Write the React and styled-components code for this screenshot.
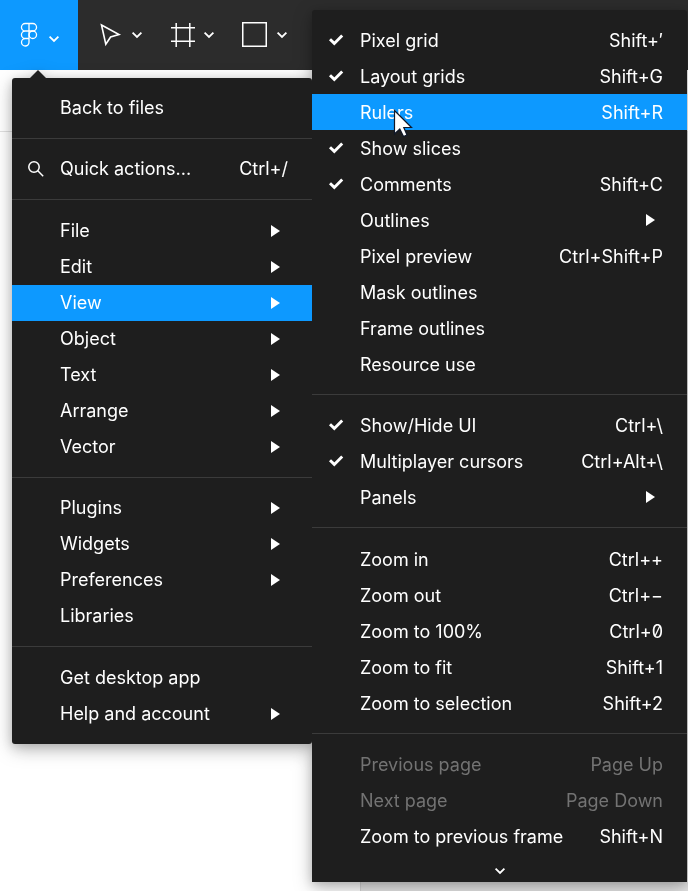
import React from "react";
import styled, { createGlobalStyle, css } from "styled-components";

const Global = createGlobalStyle`
  * { box-sizing: border-box; }
  html, body { margin: 0; background: #ffffff; }
  body {
    font-family: Inter, "Open Sans", sans-serif;
    font-size: 18px;
    line-height: 24px;
    color: #ffffff;
  }
  button {
    font: inherit;
    color: inherit;
    border: 0;
    margin: 0;
    padding: 0;
    background: none;
    text-align: left;
    cursor: default;
  }
`;

const Page = styled.div`
  position: relative;
  min-height: 100vh;
  display: flex;
  flex-direction: column;
  overflow: hidden;
`;

const Toolbar = styled.header`
  display: flex;
  height: 70px;
  background: #2c2c2c;
`;

const ToolButton = styled.button`
  display: flex;
  align-items: center;
  justify-content: center;
  gap: 8px;
  width: 72px;
  height: 70px;
`;

const MainMenuButton = styled(ToolButton)`
  width: 78px;
  gap: 10px;
  padding-left: 2px;
  background: #0d99ff;
`;

const LowChevron = styled.span`
  display: flex;
  padding-top: 8px;
`;

const Tools = styled.div`
  display: flex;
  padding-left: 7px;
`;

const Workspace = styled.main`
  flex: 1;
  display: flex;
  flex-direction: column;
`;

const TabStrip = styled.div`
  height: 62px;
  border-bottom: 1px solid #e0e0e0;
`;

const Panels = styled.div`
  flex: 1;
  display: flex;
`;

const LayersPanel = styled.aside`
  width: 361px;
  border-right: 1px solid #d4d4d4;
`;

const Canvas = styled.section`
  flex: 1;
  background: #e5e5e5;
`;

const MenuLayer = styled.div`
  position: absolute;
  top: 10px;
  left: 12px;
  display: flex;
  align-items: flex-start;
  filter: drop-shadow(0 5px 9px rgba(0, 0, 0, 0.26)) drop-shadow(0 2px 4px rgba(0, 0, 0, 0.14));
`;

const MenuPanel = styled.nav`
  position: relative;
  background: #1e1e1e;
`;

const MainMenu = styled(MenuPanel)`
  margin-top: 68px;
  width: 300px;
  border-radius: 3px;
`;

const SubMenu = styled(MenuPanel)`
  width: 375px;
  border-radius: 3px 3px 0 0;
`;

const Pointer = styled.svg`
  position: absolute;
  top: -8px;
  left: 18px;
`;

const Group = styled.div`
  padding: 12px 0;

  & + & {
    border-top: 1px solid #3b3b3b;
  }

  & + &:nth-of-type(odd) {
    padding-top: 13px;
  }

  &:last-of-type {
    padding-bottom: ${(p) => (p.$flush ? "0" : "12px")};
  }
`;

const Item = styled.button`
  display: flex;
  align-items: center;
  width: 100%;
  height: 36px;
  padding-right: ${(p) => (p.$arrow ? "32px" : "24px")};
  white-space: nowrap;
  ${(p) => p.$active && css`background: #0d99ff;`}

  &:disabled {
    color: #737373;
  }
`;

const Gutter = styled.span`
  display: flex;
  align-items: center;
  justify-content: center;
  width: 48px;
  height: 36px;
`;

const Label = styled.span`
  flex: 1;

  ${SubMenu} & {
    padding-top: 1px;
  }
`;

const Shortcut = styled.span`
  font-feature-settings: "zero" 1;

  ${SubMenu} & {
    padding-top: 1px;
  }
`;

const MoreButton = styled.button`
  display: flex;
  align-items: center;
  justify-content: center;
  width: 100%;
  height: 28px;
  padding-top: 6px;
`;

const CursorArrow = styled.svg`
  position: absolute;
  top: 99px;
  left: 81px;
`;

const Chevron = () => (
  <svg width="12" height="8" viewBox="0 0 12 8" fill="none" stroke="#fff" strokeWidth="1.8" aria-hidden="true">
    <path d="M1.6 1.7 6 6 10.4 1.7" />
  </svg>
);

const Check = () => (
  <svg width="16" height="12" viewBox="0 0 16 12" fill="none" stroke="#fff" strokeWidth="2.9" aria-hidden="true">
    <path d="M2 5.2 6.3 9.4 14.2 1.4" />
  </svg>
);

const SearchIcon = () => (
  <svg width="18" height="18" viewBox="0 0 18 18" fill="none" stroke="#fff" strokeWidth="1.5" aria-hidden="true">
    <circle cx="7" cy="7" r="5.2" />
    <path d="M10.8 10.8 16.2 16.2" />
  </svg>
);

const Triangle = () => (
  <svg width="9" height="12" viewBox="0 0 9 12" fill="#fff" aria-hidden="true">
    <path d="M0 0 9 6 0 12z" />
  </svg>
);

const FigmaLogo = () => (
  <svg width="18" height="26" viewBox="0 0 18 26" fill="none" stroke="#fff" strokeWidth="1.3" aria-hidden="true">
    <path d="M9 1.5H5.2a3.75 3.75 0 0 0 0 7.5H9zM9 1.5h3.8a3.75 3.75 0 0 1 0 7.5H9M9 9H5.2a3.75 3.75 0 0 0 0 7.5H9zM9 16.5H5.2A3.75 3.75 0 1 0 9 20.3z" />
    <circle cx="12.8" cy="12.75" r="3.75" />
  </svg>
);

const MoveIcon = () => (
  <svg width="24" height="26" viewBox="0 0 24 26" fill="none" stroke="#fff" strokeWidth="1.6" aria-hidden="true">
    <path d="M2.5 3 20 12.5 11.6 15 6.8 22.2z" />
  </svg>
);

const FrameIcon = () => (
  <svg width="24" height="24" viewBox="0 0 24 24" fill="none" stroke="#fff" strokeWidth="1.5" aria-hidden="true">
    <path d="M5.2 0v24M18.8 0v24M0 4.7h24M0 18.3h24" />
  </svg>
);

const RectIcon = () => (
  <svg width="26" height="26" viewBox="0 0 26 26" fill="none" stroke="#fff" strokeWidth="1.5" aria-hidden="true">
    <rect x="0.75" y="0.75" width="23.5" height="23.5" />
  </svg>
);

const mainGroups = [
  [{ label: "Back to files" }],
  [{ label: "Quick actions...", keys: "Ctrl+/", icon: "search" }],
  [
    { label: "File", arrow: true },
    { label: "Edit", arrow: true },
    { label: "View", arrow: true, active: true },
    { label: "Object", arrow: true },
    { label: "Text", arrow: true },
    { label: "Arrange", arrow: true },
    { label: "Vector", arrow: true },
  ],
  [
    { label: "Plugins", arrow: true },
    { label: "Widgets", arrow: true },
    { label: "Preferences", arrow: true },
    { label: "Libraries" },
  ],
  [{ label: "Get desktop app" }, { label: "Help and account", arrow: true }],
];

const viewGroups = [
  [
    { label: "Pixel grid", keys: "Shift+′", icon: "check" },
    { label: "Layout grids", keys: "Shift+G", icon: "check" },
    { label: "Rulers", keys: "Shift+R", active: true },
    { label: "Show slices", icon: "check" },
    { label: "Comments", keys: "Shift+C", icon: "check" },
    { label: "Outlines", arrow: true },
    { label: "Pixel preview", keys: "Ctrl+Shift+P" },
    { label: "Mask outlines" },
    { label: "Frame outlines" },
    { label: "Resource use" },
  ],
  [
    { label: "Show/Hide UI", keys: "Ctrl+\\", icon: "check" },
    { label: "Multiplayer cursors", keys: "Ctrl+Alt+\\", icon: "check" },
    { label: "Panels", arrow: true },
  ],
  [
    { label: "Zoom in", keys: "Ctrl++" },
    { label: "Zoom out", keys: "Ctrl+−" },
    { label: "Zoom to 100%", keys: "Ctrl+0" },
    { label: "Zoom to fit", keys: "Shift+1" },
    { label: "Zoom to selection", keys: "Shift+2" },
  ],
  [
    { label: "Previous page", keys: "Page Up", disabled: true },
    { label: "Next page", keys: "Page Down", disabled: true },
    { label: "Zoom to previous frame", keys: "Shift+N" },
  ],
];

const MenuItem = ({ label, keys, icon, arrow, active, disabled }) => (
  <Item type="button" $arrow={arrow} $active={active} disabled={disabled}>
    <Gutter>
      {icon === "check" && <Check />}
      {icon === "search" && <SearchIcon />}
    </Gutter>
    <Label>{label}</Label>
    {keys && <Shortcut>{keys}</Shortcut>}
    {arrow && <Triangle />}
  </Item>
);

const MenuGroups = ({ groups, flush }) =>
  groups.map((items) => (
    <Group key={items[0].label} $flush={flush}>
      {items.map((item) => (
        <MenuItem key={item.label} {...item} />
      ))}
    </Group>
  ));

export default function App() {
  return (
    <Page>
      <Global />
      <Toolbar>
        <MainMenuButton type="button" aria-label="Main menu">
          <FigmaLogo />
          <LowChevron>
            <Chevron />
          </LowChevron>
        </MainMenuButton>
        <Tools>
          <ToolButton type="button" aria-label="Move">
            <MoveIcon />
            <Chevron />
          </ToolButton>
          <ToolButton type="button" aria-label="Frame">
            <FrameIcon />
            <Chevron />
          </ToolButton>
          <ToolButton type="button" aria-label="Rectangle">
            <RectIcon />
            <Chevron />
          </ToolButton>
        </Tools>
      </Toolbar>
      <Workspace>
        <TabStrip />
        <Panels>
          <LayersPanel />
          <Canvas />
        </Panels>
      </Workspace>
      <MenuLayer>
        <MainMenu aria-label="Main menu">
          <Pointer width="16" height="8" viewBox="0 0 16 8" fill="#1e1e1e" aria-hidden="true">
            <path d="M0 8 8 0 16 8z" />
          </Pointer>
          <MenuGroups groups={mainGroups} />
        </MainMenu>
        <SubMenu aria-label="View">
          <MenuGroups groups={viewGroups} flush />
          <MoreButton type="button" aria-label="More items">
            <Chevron />
          </MoreButton>
          <CursorArrow width="20" height="29" viewBox="0 0 20 29" aria-hidden="true">
            <path
              d="M1.5 1.5V25L6.8 20 10.5 27.5 14 26 10.8 18.5H18.5z"
              fill="#fff"
              stroke="#101828"
              strokeWidth="1.2"
            />
          </CursorArrow>
        </SubMenu>
      </MenuLayer>
    </Page>
  );
}
